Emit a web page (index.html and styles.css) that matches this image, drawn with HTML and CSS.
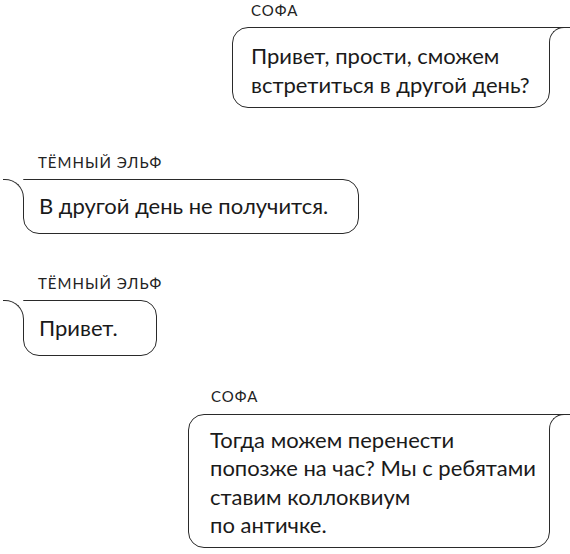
FILE: index.html
```html
<!DOCTYPE html>
<html lang="ru">
<head>
<meta charset="utf-8">
<link rel="stylesheet" href="styles.css">
</head>
<body>
<div class="chat">
  <div class="msg msg-right msg-1">
    <div class="name">СОФА</div>
    <div class="bubble bubble-right b1">Привет, прости, сможем<br>встретиться в другой день?</div>
  </div>
  <div class="msg msg-left msg-2">
    <div class="name">ТЁМНЫЙ ЭЛЬФ</div>
    <div class="bubble bubble-left b2">В другой день не получится.</div>
  </div>
  <div class="msg msg-left msg-3">
    <div class="name">ТЁМНЫЙ ЭЛЬФ</div>
    <div class="bubble bubble-left b3">Привет.</div>
  </div>
  <div class="msg msg-right msg-4">
    <div class="name">СОФА</div>
    <div class="bubble bubble-right b4">Тогда можем перенести<br>попозже на час? Мы с ребятами<br>ставим коллоквиум<br>по античке.</div>
  </div>
</div>
</body>
</html>
```

FILE: styles.css
```css
html, body {
  margin: 0;
  padding: 0;
  background: #fff;
  overflow: hidden;
}

body {
  font-family: "Lato", "Liberation Sans", sans-serif;
  color: #1a1a1a;
}

.chat {
  display: flex;
  flex-direction: column;
  padding-top: 2px;
}

.msg {
  display: flex;
  flex-direction: column;
}

.msg-right {
  align-items: flex-end;
  padding-right: 20px;
}

.msg-left {
  align-items: flex-start;
  padding-left: 23px;
}

.msg-2 { margin-top: 46px; }
.msg-3 { margin-top: 41px; }
.msg-4 { margin-top: 32px; }

.name {
  font-size: 15px;
  line-height: 16px;
  letter-spacing: 1px;
  margin-bottom: 9px;
  color: #222;
}

.msg-4 .name { margin-bottom: 10px; }

.msg-right .name { align-self: flex-start; }
.msg-1 .name { margin-left: 251px; }
.msg-4 .name { margin-left: 211px; }
.msg-left .name { margin-left: 15px; }

.bubble {
  position: relative;
  background: #fff;
  border: 1.5px solid #2a2a2a;
  border-radius: 16px;
  font-size: 22px;
  line-height: 29px;
  white-space: nowrap;
  box-sizing: border-box;
}

.bubble-right {
  border-top-right-radius: 0;
  padding: 12px 18px 12px 21px;
}

.bubble-right::before {
  content: "";
  position: absolute;
  left: 100%;
  top: -1.5px;
  width: 26px;
  height: 15px;
  border-top: 1.5px solid #2a2a2a;
  background: #fff;
}

.bubble-right::after {
  content: "";
  position: absolute;
  left: 100%;
  top: -1.5px;
  width: 26px;
  height: 18px;
  border-top: 1.5px solid #2a2a2a;
  border-left: 1.5px solid #2a2a2a;
  border-top-left-radius: 15px;
}

.bubble-left {
  border-top-left-radius: 0;
  padding: 11px 16px 13px 15px;
}

.bubble-left::before {
  content: "";
  position: absolute;
  top: 0;
  left: -1.5px;
  width: 1.5px;
  height: 18px;
  background: #fff;
}

.bubble-left::after {
  content: "";
  position: absolute;
  right: 100%;
  top: -1.5px;
  width: 20px;
  height: 22px;
  border-top: 1.5px solid #2a2a2a;
  border-right: 1.5px solid #2a2a2a;
  border-top-right-radius: 19px;
}

.b1 { width: 318px; padding: 13px 18px 8px 18px; }
.b2 { width: 336px; }
.b3 { width: 134px; padding-top: 12px; padding-bottom: 13px; }
.b4 { width: 362px; line-height: 28.3px; padding-top: 11px; padding-bottom: 8px; }
```
